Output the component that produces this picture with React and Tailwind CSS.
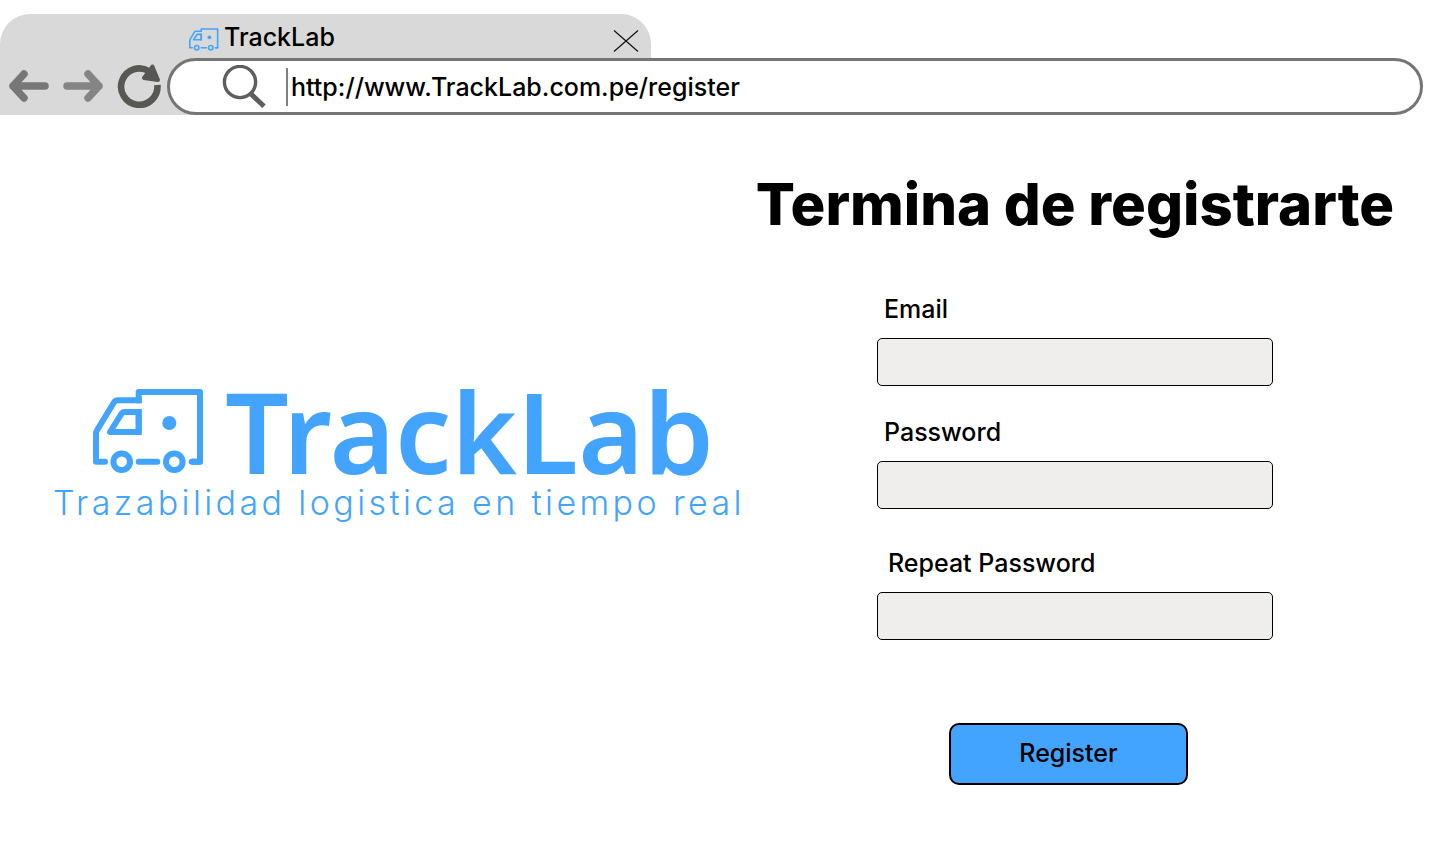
import React from "react";

function TruckLogo({ className, strokeWidth = 6 }) {
  return (
    <svg
      viewBox="0 0 112 86"
      fill="none"
      stroke="#42a4ff"
      strokeWidth={strokeWidth}
      strokeLinejoin="round"
      className={className}
      aria-hidden="true"
    >
      <path d="M12 73.7H3V45.5Q3 43.8 4 42.3L20.7 14.7Q22.2 12.3 24.5 12.3H45.7" strokeLinecap="round" />
      <path d="M45.7 15.2V4H107V73.7H98.7" />
      <path d="M98.7 73.7H107M45.7 73.7H64.3" strokeLinecap="round" />
      <path d="M45.7 12.3H48.6" />
      <path d="M48.6 24H31.2Q29.6 24 28.6 25.6L17 44H45.7V24" strokeLinejoin="round" />
      <path d="M45.7 44H48.6M45.7 46.9V21.1" />
      <circle cx="28.7" cy="73.7" r="8.3" />
      <circle cx="81.3" cy="73.7" r="8.3" />
      <circle cx="76.3" cy="35" r="7" fill="#42a4ff" stroke="none" />
    </svg>
  );
}

function BackIcon() {
  return (
    <svg viewBox="0 0 40 34" fill="none" stroke="#777777" strokeWidth="7.5" strokeLinecap="round" strokeLinejoin="round" className="h-[34px] w-10" aria-hidden="true">
      <path d="M4 17H36M15 5L4 17L15 29" />
    </svg>
  );
}

function ForwardIcon() {
  return (
    <svg viewBox="0 0 40 34" fill="none" stroke="#858585" strokeWidth="7.5" strokeLinecap="round" strokeLinejoin="round" className="h-[34px] w-10" aria-hidden="true">
      <path d="M4 17H36M25 5L36 17L25 29" />
    </svg>
  );
}

function ReloadIcon() {
  return (
    <svg viewBox="0 0 44 44" fill="none" className="size-11" aria-hidden="true">
      <path d="M40.4 21A18.2 18.2 0 1 1 32.1 7.3" stroke="#575754" strokeWidth="6.6" />
      <path d="M35.4 2.6L27 14L41 16Z" fill="#575754" stroke="#575754" strokeWidth="4" strokeLinejoin="round" />
    </svg>
  );
}

function SearchIcon() {
  return (
    <svg viewBox="0 0 44 44" fill="none" stroke="#5e5e5e" className="size-11" aria-hidden="true">
      <circle cx="18" cy="17" r="15.6" strokeWidth="3.4" />
      <path d="M29 29L42 41.3" strokeWidth="5" />
    </svg>
  );
}

function BrowserBar() {
  return (
    <header className="grid grid-cols-[651px_1fr] grid-rows-[44px_57px] pt-[14px]">
      <div className="col-start-1 row-start-1 row-end-3 rounded-t-[30px] bg-[#d9d9d9]" />
      <div className="col-start-1 row-start-1 flex items-center pt-0.5 pr-3 pl-[189px]">
        <TruckLogo className="mt-1 h-[23px] w-[30px]" strokeWidth={6} />
        <span className="ml-[5px] text-[25px] leading-8 font-medium">TrackLab</span>
        <button type="button" aria-label="Close tab" className="mt-2 ml-auto">
          <svg viewBox="0 0 26 22" fill="none" stroke="#111111" strokeWidth="1.2" className="h-[22px] w-[26px]" aria-hidden="true">
            <path d="M1 0.5L25 21.5M25 0.5L1 21.5" />
          </svg>
        </button>
      </div>
      <nav className="col-span-2 col-start-1 row-start-2 flex items-center pr-[17px] pl-[9px]" aria-label="Browser">
        <div className="flex items-center gap-[14px] pb-0.5">
          <button type="button" aria-label="Back">
            <BackIcon />
          </button>
          <button type="button" aria-label="Forward">
            <ForwardIcon />
          </button>
          <button type="button" aria-label="Reload">
            <ReloadIcon />
          </button>
        </div>
        <div className="ml-[6px] flex h-full flex-1 items-center rounded-full border-3 border-[#757575] bg-white pr-8 pl-[52px]">
          <SearchIcon />
          <input
            type="text"
            aria-label="Address"
            defaultValue="http://www.TrackLab.com.pe/register"
            className="ml-5 h-[38px] min-w-0 flex-1 border-l-2 border-[#808080] pl-[3px] text-[25px] font-medium outline-none"
          />
        </div>
      </nav>
    </header>
  );
}

function Field({ id, type, label, labelClass }) {
  return (
    <div className="flex flex-col">
      <label htmlFor={id} className={"mb-[13px] text-[25px] leading-8 font-medium " + labelClass}>
        {label}
      </label>
      <input id={id} type={type} className="h-12 rounded-[5px] border border-black bg-[#efeeec] px-3 text-xl" />
    </div>
  );
}

export default function App() {
  return (
    <div className="min-h-screen bg-white font-['Inter',sans-serif] text-black">
      <BrowserBar />
      <main className="flex pr-[39px] pl-[53px]">
        <section className="mt-[266px] w-[696px] shrink-0 text-[#42a4ff]" aria-label="TrackLab">
          <div className="flex items-center pl-10">
            <TruckLogo className="h-[86px] w-28" />
            <p className="ml-5 font-['Noto_Sans',sans-serif] text-[112px] leading-[100px] font-semibold">TrackLab</p>
          </div>
          <p className="text-[34px] leading-11 font-light tracking-widest whitespace-nowrap">
            Trazabilidad logistica en tiempo real
          </p>
        </section>
        <section className="flex flex-1 flex-col items-center pt-[53px]">
          <h1 className="text-[58px] leading-[72px] font-extrabold whitespace-nowrap">Termina de registrarte</h1>
          <form className="mt-[53px] flex w-[396px] flex-col" onSubmit={(e) => e.preventDefault()}>
            <Field id="email" type="email" label="Email" labelClass="pl-[7px]" />
            <div className="mt-[30px]">
              <Field id="password" type="password" label="Password" labelClass="pl-[7px]" />
            </div>
            <div className="mt-[38px]">
              <Field id="repeat-password" type="password" label="Repeat Password" labelClass="pl-[11px]" />
            </div>
            <button type="submit" className="mt-[83px] ml-[72px] h-[62px] w-[239px] rounded-[10px] border-2 border-black bg-[#42a4ff] text-[25px] font-medium">
              Register
            </button>
          </form>
        </section>
      </main>
    </div>
  );
}
